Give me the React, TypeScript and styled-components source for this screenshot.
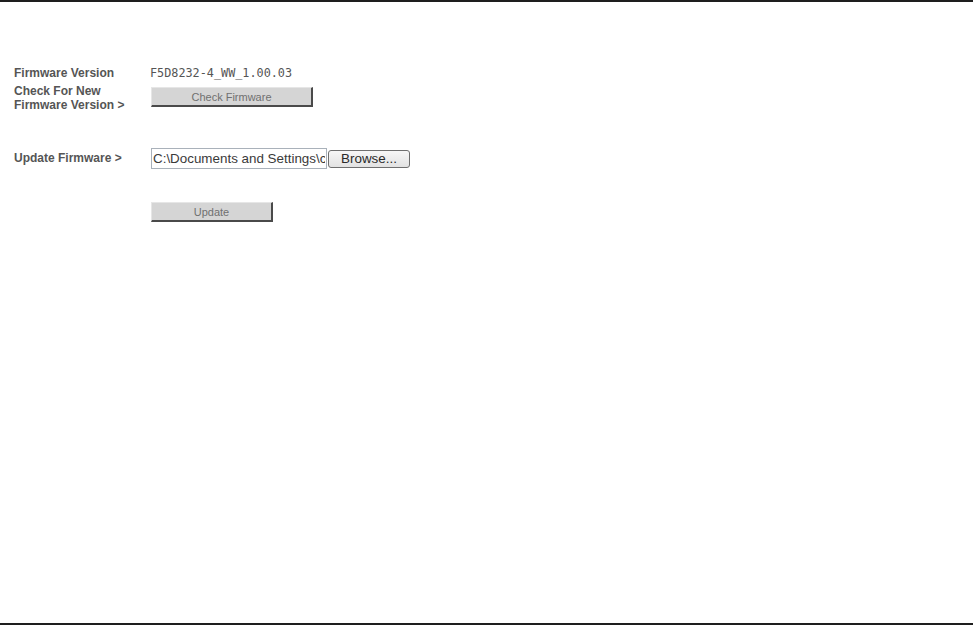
import React from "react";
import styled, { createGlobalStyle } from "styled-components";

const Global = createGlobalStyle`
  html, body { margin: 0; padding: 0; background: #fff; }
  body { font-family: "Liberation Sans", Arial, sans-serif; }
  * { box-sizing: border-box; }
`;

const Page = styled.div`
  width: 973px;
  height: 625px;
  border-top: 2px solid #1e1e1e;
  border-bottom: 2px solid #1e1e1e;
  display: flex;
  flex-direction: column;
`;

const Form = styled.div`
  display: grid;
  grid-template-columns: 137px auto;
  justify-content: start;
  align-items: start;
  padding: 64px 0 0 14px;
`;

const Label = styled.div<{ $top?: number }>`
  font-family: "Liberation Sans", Arial, sans-serif;
  font-weight: bold;
  font-size: 12px;
  line-height: 14px;
  color: #555;
  margin-top: ${(p) => p.$top ?? 0}px;
`;

const Cell = styled.div<{ $top?: number }>`
  display: flex;
  align-items: center;
  margin-top: ${(p) => p.$top ?? 0}px;
`;

const Value = styled.span`
  font-family: "DejaVu Sans Mono", "Liberation Mono", monospace;
  font-size: 11.8px;
  line-height: 14px;
  color: #555;
  margin-left: -1px;
`;

const FlatButton = styled.button<{ $w: number }>`
  width: ${(p) => p.$w}px;
  height: 20px;
  padding: 0;
  background: #d5d5d5;
  border-style: solid;
  border-width: 1px 2px 2px 1px;
  border-color: #e6e6e6 #4a4a4a #4a4a4a #e6e6e6;
  font-family: "Liberation Sans", Arial, sans-serif;
  font-size: 11px;
  color: #707070;
  cursor: pointer;
`;

const FileInput = styled.input`
  width: 176px;
  height: 21px;
  border: 1px solid #a9b1ba;
  padding: 0 1px;
  font-family: "Liberation Sans", Arial, sans-serif;
  font-size: 13.4px;
  color: #3a3a3a;
  background: #fff;
  outline: none;
`;

const BrowseButton = styled.button`
  margin-left: 1px;
  width: 82px;
  height: 18px;
  padding: 0;
  border: 1px solid #6f6f6f;
  border-radius: 3px;
  background: linear-gradient(#f7f7f7, #e2e2e2);
  font-family: "Liberation Sans", Arial, sans-serif;
  font-size: 13.4px;
  color: #2a2a2a;
  line-height: 16px;
`;

export default function App() {
  return (
    <>
      <Global />
      <Page>
        <Form>
          <Label>Firmware Version</Label>
          <Cell>
            <Value>F5D8232-4_WW_1.00.03</Value>
          </Cell>

          <Label $top={4}>
            Check For New
            <br />
            Firmware Version &gt;
          </Label>
          <Cell $top={7}>
            <FlatButton $w={162}>Check Firmware</FlatButton>
          </Cell>

          <Label $top={39}>Update Firmware &gt;</Label>
          <Cell $top={36}>
            <FileInput readOnly value="C:\Documents and Settings\cadmin\Desktop\firmware.bin" />
            <BrowseButton>Browse...</BrowseButton>
          </Cell>

          <div />
          <Cell $top={33}>
            <FlatButton $w={122}>Update</FlatButton>
          </Cell>
        </Form>
      </Page>
    </>
  );
}
